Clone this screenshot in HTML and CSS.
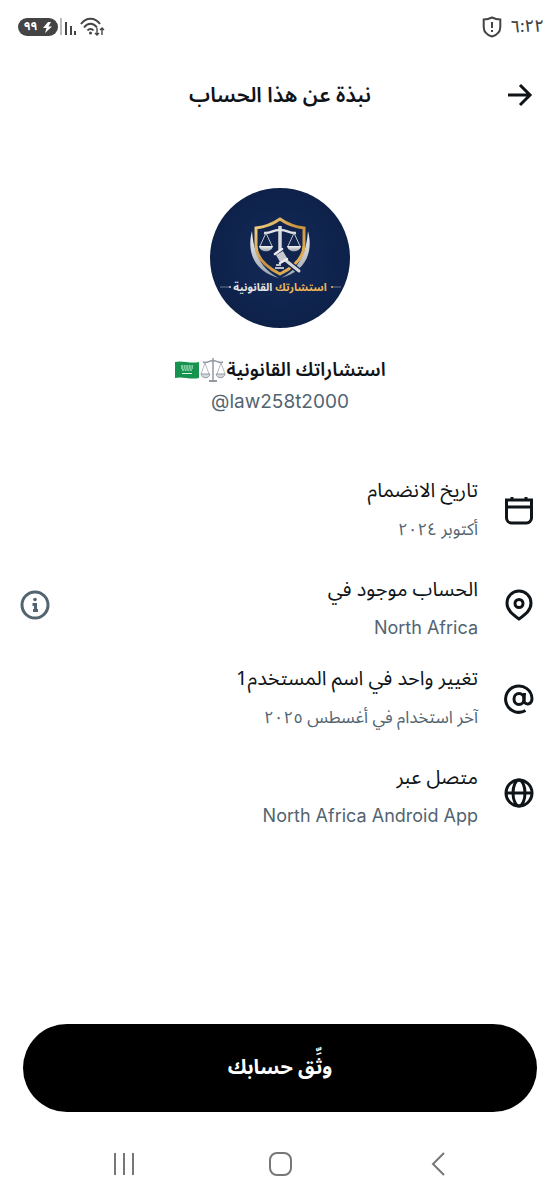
FILE: index.html
```html
<!DOCTYPE html>
<html lang="ar" dir="rtl">
<head>
    <meta charset="UTF-8">
    <meta name="viewport" content="width=device-width, initial-scale=1.0">
    <title>نبذة عن هذا الحساب</title>
    <link rel="stylesheet" href="styles.css">
</head>
<body>
    <div class="status-bar">
        <div class="status-group">
            <span class="time">٦:٢٢</span>
            <svg width="20" height="22" viewBox="0 0 20 22" fill="none" stroke="#444" stroke-width="2">
                <path d="M10 1.5C7 3 4 3.5 1.7 3.5V11C1.7 16 5 19 10 20.5C15 19 18.3 16 18.3 11V3.5C16 3.5 13 3 10 1.5Z"/>
                <path d="M10 6v6M10 14v2"/>
            </svg>
        </div>
        <div class="status-group status-icons">
            <svg width="26" height="20" viewBox="0 0 26 20" fill="none" stroke="#444" stroke-width="2">
                <path d="M1 7C6 0 15 0 20 7M4 10.5C8 5.5 13 5.5 17 10.5M7.5 13.5C9 11.5 12 11.5 13.5 13.5"/>
                <circle cx="10.5" cy="16" r="1.5" fill="#444" stroke="none"/>
                <path d="M17 11v7M15 16l2 2 2-2M22 18v-7M20 13l2-2 2 2" stroke-width="1.4"/>
            </svg>
            <svg width="18" height="18" viewBox="0 0 18 18" fill="#444">
                <path d="M0 0h2v17H0z" fill="#bbb"/>
                <path d="M5 4h2v13H5zM10 8h2v9h-2zM14 13h2v4h-2z"/>
            </svg>
            <span class="battery">
                <svg width="9" height="11" viewBox="0 0 9 11" fill="#fff"><path d="M5 0L0 6h3.5L2 11l7-6.5H5.5L8 0z"/></svg>
                ٩٩
            </span>
        </div>
    </div>

    <header class="header">
        <button class="icon-button" aria-label="رجوع">
            <svg width="26" height="24" viewBox="0 0 26 24" fill="none" stroke="#0f1419" stroke-width="3">
                <path d="M1 12h22M13 2l10 10-10 10"/>
            </svg>
        </button>
        <h1>نبذة عن هذا الحساب</h1>
    </header>

    <main>
        <section class="profile">
            <svg class="avatar" viewBox="0 0 140 140" role="img" aria-label="استشارتك القانونية">
                <defs>
                    <radialGradient id="navy">
                        <stop offset="0" stop-color="#142b58"/>
                        <stop offset="1" stop-color="#0d2149"/>
                    </radialGradient>
                    <linearGradient id="gold" x1="0" y1="0" x2="1" y2="1">
                        <stop offset="0" stop-color="#f6d58a"/>
                        <stop offset="0.5" stop-color="#c8923a"/>
                        <stop offset="1" stop-color="#f0bf62"/>
                    </linearGradient>
                    <linearGradient id="silver" x1="0" y1="0" x2="0" y2="1">
                        <stop offset="0" stop-color="#f4f4f4"/>
                        <stop offset="1" stop-color="#9aa0aa"/>
                    </linearGradient>
                </defs>
                <circle cx="70" cy="70" r="70" fill="url(#navy)"/>
                <path d="M42 43C36 66 46 84 69 90C54 82 44 70 42 43Z" fill="url(#silver)"/>
                <path d="M98 43C104 66 94 84 71 90C86 82 96 70 98 43Z" fill="url(#silver)"/>
                <path d="M70 31C63 36 55 39 46 40V57C46 69 56 79 70 86C84 79 94 69 94 57V40C85 39 77 36 70 31Z" fill="#10244e" stroke="url(#gold)" stroke-width="3"/>
                <path d="M70 38V62" stroke="#d8dade" stroke-width="3.5"/>
                <path d="M54 45C61 46 64 41 70 42C76 41 79 46 86 45" fill="none" stroke="#e1e2e5" stroke-width="2.5"/>
                <path d="M56 45L50 58M56 45L62 58M84 45L78 58M84 45L90 58" stroke="#c3c7ce"/>
                <path d="M49 58H63C62 65 50 65 49 58ZM77 58H91C90 65 78 65 77 58Z" fill="url(#silver)"/>
                <path d="M74 71L90 84" stroke="#10244e" stroke-width="6"/>
                <path d="M74 71L89 83" stroke="#d5d5d8" stroke-width="3" stroke-linecap="round"/>
                <path d="M66 67L73 63L77 70L70 74Z" fill="#c7c9ce"/>
                <path d="M65 66L72 61M70 75L77 71" stroke="#eee" stroke-width="2.5" stroke-linecap="round"/>
                <path d="M65 80H74M66 77H71" stroke="#b9bdc5" stroke-width="2"/>
                <path d="M10 99H19M122 99H131" stroke="#6d7890"/>
                <circle cx="20" cy="99" r="1" fill="#ddd"/>
                <circle cx="122" cy="99" r="1" fill="#edb85c"/>
                <text class="logo-text" x="70" y="103" text-anchor="middle" fill="#e3e3e5"><tspan fill="#edb85c">استشارتك</tspan> القانونية</text>
            </svg>
            <h2 class="name">
                <span>استشاراتك القانونية</span>
                <svg width="26" height="26" viewBox="0 0 26 26" fill="none" stroke="#9299a3" role="img" aria-label="ميزان">
                    <path d="M13 1V23M3 5C8 7 9 3 13 4C17 3 18 7 23 5" stroke-width="1.5"/>
                    <path d="M5 6L1 17M5 6L9 17M21 6L17 17M21 6L25 17" stroke-width="0.7"/>
                    <path d="M1 17H10C9 22 2 22 1 17ZM16 17H25C24 22 17 22 16 17Z" fill="#d5dae1"/>
                    <path d="M9 24H17" stroke-width="2"/>
                </svg>
                <svg width="26" height="20" viewBox="0 0 26 20" role="img" aria-label="السعودية">
                    <path d="M1 2C8 0 16 4 25 2V18C16 20 8 16 1 18Z" fill="#16934f"/>
                    <path d="M7 6H19M7 8H19M8 10H18" stroke="#a5dcbd" stroke-width="1.3" stroke-dasharray="2 0.6"/>
                    <path d="M8 13.5H18" stroke="#d9f0e2"/>
                </svg>
            </h2>
            <a class="handle" href="#" dir="ltr">@law258t2000</a>
        </section>

        <ul class="details">
            <li class="detail">
                <svg class="detail-icon" viewBox="0 0 32 32">
                    <path d="M3.5 5H28.5V23A5 5 0 0 1 23.5 28H8.5A5 5 0 0 1 3.500 23ZM3.5 12H28.5M9 2V5M23 2V5"/>
                </svg>
                <div class="detail-text">
                    <p class="label">تاريخ الانضمام</p>
                    <p class="value">أكتوبر ٢٠٢٤</p>
                </div>
            </li>
            <li class="detail">
                <svg class="detail-icon" viewBox="0 0 32 32">
                    <path d="M16 30C9 25 4 21 4 14A12 12 0 0 1 28 14C28 21 23 25 16 30Z"/>
                    <circle cx="16" cy="14.5" r="4"/>
                </svg>
                <div class="detail-text detail-text-latin">
                    <p class="label">الحساب موجود في</p>
                    <p class="value">North Africa</p>
                </div>
                <button class="icon-button" aria-label="معلومات">
                    <svg width="30" height="30" viewBox="0 0 30 30" fill="none" stroke="#536471" stroke-width="3">
                        <circle cx="15" cy="15" r="13"/>
                        <path d="M12.5 14.5H15.5V20.5M13 20.5H18"/>
                        <circle cx="15" cy="9.5" r="1.8" fill="#536471" stroke="none"/>
                    </svg>
                </button>
            </li>
            <li class="detail">
                <svg class="detail-icon" viewBox="0 0 32 32">
                    <ellipse cx="16" cy="16" rx="5" ry="5.5"/>
                    <path d="M21.5 10L21 17C21 23 29 22 29 15.5A13.2 13.2 0 1 0 22.5 27.5"/>
                </svg>
                <div class="detail-text">
                    <p class="label">تغيير واحد في اسم المستخدم1</p>
                    <p class="value">آخر استخدام في أغسطس ٢٠٢٥</p>
                </div>
            </li>
            <li class="detail">
                <svg class="detail-icon" viewBox="0 0 32 32">
                    <circle cx="16" cy="16" r="13"/>
                    <ellipse cx="16" cy="16" rx="6" ry="13"/>
                    <path d="M3 16H29"/>
                </svg>
                <div class="detail-text detail-text-latin">
                    <p class="label">متصل عبر</p>
                    <p class="value">North Africa Android App</p>
                </div>
            </li>
        </ul>
    </main>

    <footer class="footer">
        <button class="verify-button">وثِّق حسابك</button>
    </footer>

    <nav class="nav-bar">
        <button class="icon-button" aria-label="السابق">
            <svg width="24" height="24" viewBox="0 0 24 24"><path d="M18 1L7 12L18 23"/></svg>
        </button>
        <button class="icon-button" aria-label="الرئيسية">
            <svg width="24" height="24" viewBox="0 0 24 24"><rect x="1" y="1" width="21" height="22" rx="7"/></svg>
        </button>
        <button class="icon-button" aria-label="التطبيقات">
            <svg width="24" height="24" viewBox="0 0 24 24"><path d="M3 1V23M12 1V23M21 1V23"/></svg>
        </button>
    </nav>
</body>
</html>
```
FILE: styles.css
```css
* {
    box-sizing: border-box;
}
body {
    margin: 0;
    min-height: 100vh;
    display: flex;
    flex-direction: column;
    background-color: #fff;
    color: #0f1419;
    font-family: "Noto Sans Arabic", "Noto Sans", "DejaVu Sans", sans-serif;
}
h1, h2, p, ul {
    margin: 0;
    padding: 0;
}
svg {
    display: block;
    flex-shrink: 0;
}
.icon-button {
    padding: 0;
    border: none;
    background: none;
    cursor: pointer;
}
.status-bar {
    display: flex;
    justify-content: space-between;
    align-items: center;
    height: 54px;
    padding: 0 16px 0 18px;
    color: #444;
}
.status-group {
    display: flex;
    align-items: center;
    gap: 8px;
}
.status-icons {
    gap: 2px;
}
.time {
    font-size: 17px;
    font-weight: 500;
}
.battery {
    display: flex;
    align-items: center;
    justify-content: center;
    gap: 6px;
    width: 40px;
    height: 18px;
    border-radius: 9px;
    background-color: #444;
    color: #fff;
    font-size: 12px;
    font-weight: bold;
    line-height: 18px;
}
.header {
    display: grid;
    grid-template-columns: 26px 1fr 26px;
    align-items: center;
    height: 82px;
    padding: 0 27px;
}
.header h1 {
    font-size: 21px;
    font-weight: 600;
    line-height: 36px;
    text-align: center;
}
main {
    flex: 1;
}
.profile {
    display: flex;
    flex-direction: column;
    align-items: center;
    padding-top: 52px;
}
.avatar {
    width: 140px;
    height: 140px;
}
.logo-text {
    font-size: 11px;
    font-weight: bold;
}
.name {
    display: flex;
    align-items: center;
    margin-top: 24px;
    font-size: 19px;
    font-weight: 600;
    line-height: 36px;
}
.handle {
    color: #536471;
    font-family: Inter, sans-serif;
    font-size: 19px;
    line-height: 28px;
    text-decoration: none;
}
.details {
    padding: 48px 25px 0 20px;
    list-style: none;
}
.detail {
    display: flex;
    align-items: center;
    min-height: 94px;
}
.detail-icon {
    width: 32px;
    height: 32px;
    fill: none;
    stroke: #0f1419;
    stroke-width: 3;
}
.detail-text {
    flex: 1;
    padding-right: 25px;
}
.label {
    font-size: 20px;
    line-height: 38px;
}
.value {
    color: #536471;
    font-size: 17px;
    line-height: 40px;
}
.detail-text-latin {
    padding-top: 8px;
}
.detail-text-latin .value {
    font-family: Inter, sans-serif;
    font-size: 18px;
    line-height: 38px;
}
.footer {
    padding: 0 23px;
}
.verify-button {
    width: 100%;
    height: 88px;
    border: none;
    border-radius: 44px;
    background-color: #000;
    color: #fff;
    font-family: inherit;
    font-size: 20px;
    font-weight: bold;
    cursor: pointer;
}
.nav-bar {
    display: flex;
    justify-content: space-around;
    align-items: center;
    height: 88px;
    padding: 0 44px 0 46px;
}
.nav-bar svg {
    fill: none;
    stroke: #777;
    stroke-width: 2;
}
.nav-bar .icon-button {
    margin-top: 15px;
}
```
